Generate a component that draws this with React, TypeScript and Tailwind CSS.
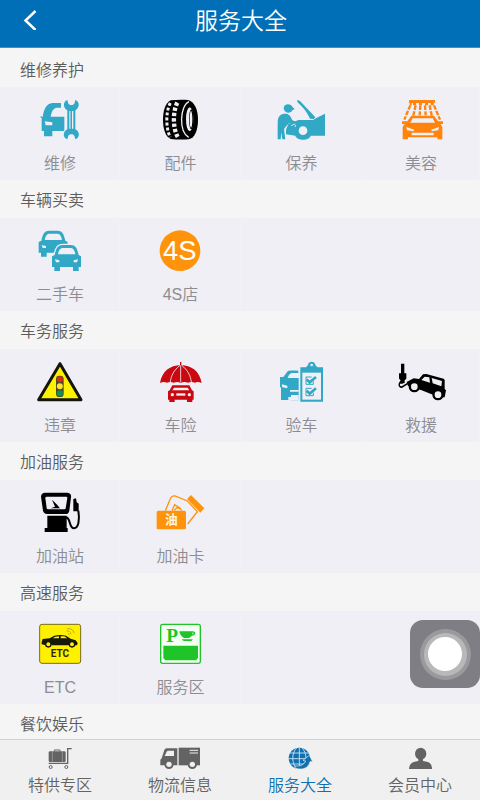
import type { ReactNode } from "react"

const BG = "#efeff5"
const CYAN = "#30a8c6"
const ORANGE = "#ff830c"

interface Service {
  name: string
  icon: ReactNode
}

interface Section {
  title: string
  items: Service[]
}

// Front view of a car, used twice in the second-hand icon
function FrontCar({ x, y }: { x: number; y: number }) {
  return (
    <g transform={`translate(${x} ${y})`}>
      <path
        fill={CYAN}
        stroke={BG}
        strokeWidth="8"
        paintOrder="stroke"
        d="M8 30C13 8 18 0 32 0H56C70 0 75 8 80 30L87 34V66H80V78H63V66H24V78H7V66H0V34Z"
      />
      <path fill={BG} d="M18 28C21 13 25 9 34 9H54C63 9 67 13 70 28Z" />
      <path fill={BG} d="M9 43L22 46V52H12ZM78 43L65 46V52H75Z" />
    </g>
  )
}

const repairIcon = (
  <g fill={CYAN}>
    <path d="M38 60C42 34 50 20 67 18H93V32H78C69 35 64 44 62 59H103V98C103 101 101 102 98 102H67V118H42V102H35V62H32V57Z" />
    <path fill={BG} d="M44 73L67 76V85H47Z" />
    <path d="M112 9C99 13 98 32 112 40V97C98 104 98 123 112 127L115 116L120 112H128L133 116L136 127C150 123 150 104 136 97V40C150 32 149 13 136 9L133 20L128 24H120L115 20Z" />
    <path stroke={BG} strokeWidth="4" d="M120 42V95M128 42V95" />
    <path stroke={CYAN} strokeWidth="4" d="M124 42V95" />
  </g>
)

const tireIcon = (
  <g fill="none">
    <path fill="#000" d="M62 10C80 8 98 8 114 9C135 15 144 40 144 68C144 98 135 123 116 127C98 128 80 128 62 126C46 118 39 95 39 68C39 42 46 18 62 10Z" />
    <path stroke={BG} strokeWidth="9" strokeDasharray="9 6" d="M61 18C47 42 47 96 61 121" />
    <path stroke={BG} strokeWidth="13" strokeDasharray="10 6" d="M82 17C68 42 68 96 84 121" />
    <path stroke={BG} strokeWidth="4" d="M117 14C89 26 86 104 116 121" />
    <ellipse cx="119" cy="67" rx="11" ry="36" fill={BG} />
    <ellipse cx="124" cy="67" rx="7" ry="30" fill="#000" />
    <ellipse cx="123" cy="67" rx="4" ry="25" fill={BG} />
  </g>
)

const maintainIcon = (
  <g fill={CYAN}>
    <path d="M38 34C38 19 60 18 65 31L71 36L64 40C61 51 39 50 38 34Z" />
    <path d="M20 127V77C20 57 29 50 43 50C54 50 59 57 64 70L78 75L75 82L54 79L46 87L39 97L43 127H34L31 106L29 127Z" />
    <path d="M79 8L87 12L133 61L128 66L117 65C107 43 96 31 79 15Z" />
    <path d="M52 81L67 76L82 69H126L136 63L162 50V116H119C115 132 78 133 73 116L45 112V98Z" />
    <circle cx="96" cy="101" r="13" fill={BG} />
    <path fill="none" stroke={BG} strokeWidth="3" d="M61 87C69 77 76 83 72 90" />
  </g>
)

const washIcon = (
  <g fill={ORANGE}>
    <path d="M55 9H132V17H128V25H119V18H111V25H102V18H93V25H84V18H75V25H66V18H62V25H56V17H53Z" />
    <path fill="none" stroke={ORANGE} strokeWidth="7" strokeDasharray="14 4" d="M58 25L40 68M74 25L66 60M88 25L86 55M102 25L104 55M116 25L123 60M129 25L147 68" />
    <path d="M61 56H129L141 73H156V81H149L154 90V127H139V121H51V127H35V90L41 81H33V73H49Z" />
    <path fill={BG} d="M65 64H125L132 77H58Z" />
    <path fill={BG} d="M46 90L70 98L67 103L48 100ZM144 90L120 98L123 103L142 100ZM62 107H128V115H62Z" />
  </g>
)

const usedCarIcon = (
  <g>
    <FrontCar x={26} y={8} />
    <FrontCar x={66} y={51} />
  </g>
)

const shop4sIcon = (
  <g>
    <circle cx="90" cy="68" r="61" fill="#ff940c" />
    <text x="89" y="97" textAnchor="middle" fontSize="82" fill="#fff" fontFamily="Liberation Sans, sans-serif">
      4S
    </text>
  </g>
)

const violationIcon = (
  <g>
    <path d="M90 14L153 122H26Z" fill="#fff200" stroke="#15150c" strokeWidth="9" strokeLinejoin="round" />
    <rect x="78" y="50" width="23" height="64" rx="10" fill="#4b4a26" />
    <circle cx="89.500" cy="61" r="9" fill="#df2a16" />
    <circle cx="89.500" cy="82" r="9" fill="#ffe32c" />
    <circle cx="89.500" cy="103" r="9" fill="#07945a" />
  </g>
)

const insuranceIcon = (
  <g fill="#c9090f">
    <path d="M92 9V20" stroke="#c9090f" strokeWidth="4" />
    <path d="M30 72C36 36 61 19 92 18C124 19 149 36 155 72Q144 67 135 71Q124 67 114 71Q103 67 92 71Q81 67 71 71Q61 67 51 71Q40 67 30 72Z" />
    <path d="M90 19C72 33 63 50 61 69M92 19V69M95 19C113 33 122 50 124 69" fill="none" stroke={BG} strokeWidth="2.500" />
    <path d="M67 79H118L126 94L131 97V122H127V129H111V122H74V129H58V122H54V97L59 94Z" />
    <path fill={BG} d="M72 86H113L118 94H67Z" />
    <circle cx="67" cy="107" r="5" fill={BG} />
    <circle cx="118" cy="107" r="5" fill={BG} />
    <path fill={BG} d="M79 103H106V110H79Z" />
  </g>
)

const inspectIcon = (
  <g fill={CYAN}>
    <path d="M37 54L50 37C54 34 67 35 82 35V42H62C55 45 53 49 50 57H83V124H60V114H52V123H30V86L27 83V54Z" />
    <path fill={BG} d="M32 76L49 80V88L34 85ZM57 93H83V98H57ZM60 108H83V124H60Z" />
    <path d="M88 25H105L111 18C112 5 132 5 133 18L139 25H156V128H88Z" />
    <path fill={BG} d="M94 41H150V122H94Z" />
    <circle cx="122" cy="18" r="4" fill={BG} />
    <path fill="none" stroke={CYAN} strokeWidth="3" d="M122 54H105V76H127V67M122 88H105V110H127V101" />
    <path fill="none" stroke={CYAN} strokeWidth="8" d="M107 61L116 70L135 54M107 95L116 104L135 88" />
  </g>
)

const rescueIcon = (
  <g>
    <path d="M30 14H40V43H46V59L41 64V71L34 74H27V80L32 82L48 72L52 75L34 86C25 90 19 78 25 70L29 64L24 59V43H30Z" />
    <path d="M47 69L68 58L84 60L96 46L106 45L158 59L161 63V90L165 94L161 115H151L120 105L92 94L51 81Z" />
    <path fill={BG} d="M101 53L115 55L117 71L91 63ZM122 57L153 66L151 82L125 73Z" />
    <circle cx="70" cy="83" r="17" />
    <circle cx="70" cy="83" r="10" fill={BG} />
    <circle cx="141" cy="107" r="17" />
    <circle cx="141" cy="107" r="10" fill={BG} />
  </g>
)

const gasStationIcon = (
  <g>
    <path d="M44 8H113Q125 10 123 22L118 62Q116 72 107 72H51Q41 71 39 62L33 20Q33 9 44 8Z" />
    <path fill={BG} d="M50 20H109Q112 20 112 24L107 55Q106 58 103 58H54Q51 58 50 55L46 24Q46 20 50 20Z" />
    <path d="M62 55L75 50L66 29L82 45L90 55Z" />
    <path d="M52 77H110V114H113V126H44V114H52Z" />
    <path fill="none" stroke="#000" strokeWidth="6" d="M108 83C122 80 116 115 132 115C145 114 150 91 145 62" />
    <path d="M130 27L138 25L140 37L146 41V64H130Z" />
  </g>
)

const gasCardIcon = (
  <g fill="none" stroke="#ff940c" strokeWidth="4">
    <path d="M46 62L62 24Q66 16 75 18L112 33L142 65L113 102" />
    <path d="M66 62L74 44L90 54L95 62M73 62L80 53L90 56" />
    <path d="M111 27L123 15L163 55L151 68Z" fill="#ff940c" stroke="none" />
    <rect x="20" y="62" width="88" height="56" rx="5" fill="#ff940c" stroke="none" />
    <text x="64" y="103" textAnchor="middle" fontSize="38" fontWeight="700" fill="#fff4df" stroke="none" fontFamily="Noto Sans CJK SC, sans-serif">
      油
    </text>
  </g>
)

const etcIcon = (
  <g>
    <rect x="29" y="10" width="123" height="117" rx="7" fill="#fff000" stroke="#766b1b" strokeWidth="3" />
    <path fill="#17170b" d="M35 63L38 54L59 52L73 44Q91 40 108 44L122 53L137 58L143 66L141 73H131Q125 60 116 73H66Q57 60 48 73L35 70Z" />
    <path fill="#fff000" d="M68 52L76 47L87 46V52ZM92 46H103L112 52H92Z" />
    <circle cx="55" cy="70" r="8" fill="#fff000" stroke="#17170b" strokeWidth="4" />
    <circle cx="126" cy="70" r="8" fill="#fff000" stroke="#17170b" strokeWidth="4" />
    <path fill="none" stroke="#a58d20" strokeWidth="2" d="M109 30Q122 28 123 40M111 23Q130 21 132 37M114 36L119 43" />
    <text x="90" y="108" textAnchor="middle" fontSize="30" fontWeight="700" fill="#2c2909" fontFamily="Roboto, sans-serif">
      ETC
    </text>
  </g>
)

const restAreaIcon = (
  <g fill="#1fc528">
    <rect x="32" y="10" width="119" height="117" rx="6" fill="#f3fff2" stroke="#1fc528" strokeWidth="4" />
    <path d="M40 74H144V111L138 118H46L40 111Z" />
    <text x="49" y="62" fontSize="58" fontWeight="700" fontFamily="Liberation Serif, serif">
      P
    </text>
    <path d="M88 31H128C140 31 138 44 125 45L117 51H102C94 47 90 41 88 31ZM95 55H129L124 60H101Z" />
    <path fill="#f3fff2" d="M127 35H132L127 41Z" />
  </g>
)

const sections: Section[] = [
  {
    title: "维修养护",
    items: [
      { name: "维修", icon: repairIcon },
      { name: "配件", icon: tireIcon },
      { name: "保养", icon: maintainIcon },
      { name: "美容", icon: washIcon },
    ],
  },
  {
    title: "车辆买卖",
    items: [
      { name: "二手车", icon: usedCarIcon },
      { name: "4S店", icon: shop4sIcon },
    ],
  },
  {
    title: "车务服务",
    items: [
      { name: "违章", icon: violationIcon },
      { name: "车险", icon: insuranceIcon },
      { name: "验车", icon: inspectIcon },
      { name: "救援", icon: rescueIcon },
    ],
  },
  {
    title: "加油服务",
    items: [
      { name: "加油站", icon: gasStationIcon },
      { name: "加油卡", icon: gasCardIcon },
    ],
  },
  {
    title: "高速服务",
    items: [
      { name: "ETC", icon: etcIcon },
      { name: "服务区", icon: restAreaIcon },
    ],
  },
  { title: "餐饮娱乐", items: [] },
]

const tabs = [
  {
    name: "特供专区",
    icon: (
      <g fill="none" stroke="currentColor" strokeWidth="4">
        <path d="M38 49H95V5H107" />
        <circle cx="44" cy="60" r="4.500" strokeWidth="3" />
        <circle cx="91" cy="60" r="4.500" strokeWidth="3" />
        <rect x="38" y="13" width="51" height="32" rx="4" fill="currentColor" stroke="none" />
        <path d="M55 13V9H72V13" strokeWidth="3" />
        <path stroke="#aaa" strokeWidth="2" d="M49 13V45M79 13V45" />
      </g>
    ),
  },
  {
    name: "物流信息",
    icon: (
      <g fill="currentColor">
        <path d="M32 4H64V55H13V38L17 34L25 9Q27 4 32 4Z" />
        <path fill="#f0f0f0" d="M35 11H54V27H26L32 14Z" />
        <path d="M68 2H132V55H68Z" />
        <path stroke="#f0f0f0" strokeWidth="3" d="M101 10H126M101 18H126" />
        <circle cx="39" cy="52" r="14" />
        <circle cx="39" cy="52" r="8" fill="#f0f0f0" />
        <circle cx="109" cy="52" r="14" />
        <circle cx="109" cy="52" r="8" fill="#f0f0f0" />
      </g>
    ),
  },
  {
    name: "服务大全",
    icon: (
      <g fill="none">
        <circle cx="70" cy="34" r="32" fill="currentColor" />
        <path stroke="#d9edf7" strokeWidth="2.500" d="M70 2V66M42 18H98M37 35H102M43 51H97M63 2C46 16 46 51 63 66M77 2C94 16 94 51 77 66" />
        <path fill="currentColor" stroke="#f0f0f0" strokeWidth="2" d="M57 57Q82 59 89 42L81 40L100 25L110 44L102 44C97 66 76 70 57 63Z" />
      </g>
    ),
  },
  {
    name: "会员中心",
    icon: (
      <g fill="currentColor">
        <ellipse cx="74" cy="20" rx="17" ry="18" />
        <path d="M67 35H81V42C101 44 108 51 108 66H39C40 51 48 44 67 42Z" />
      </g>
    ),
  },
]

export default function App() {
  return (
    <div className="relative flex h-[800px] w-[480px] flex-col overflow-hidden bg-[#f5f5f5] font-['Liberation_Sans','Noto_Sans_CJK_SC',sans-serif]">
      {/* Header */}
      <header className="grid h-12 shrink-0 grid-cols-[61px_1fr_59px] items-center border-b border-[#3d8fca] bg-[#006fb7] text-white">
        <svg className="mb-2 ml-[22px] size-5" viewBox="0 0 20 20" fill="none" stroke="currentColor" strokeWidth="2.500">
          <path d="M13.500 1L3.500 10.500L13.500 20" />
        </svg>
        <h1 className="mb-1.5 text-center text-[23px] leading-8 font-[350]">服务大全</h1>
      </header>

      {/* Service sections */}
      <main className="min-h-0 flex-1 overflow-hidden">
        {sections.map((section, index) => (
          <section key={section.title}>
            <h2 className={`flex items-center pl-5 text-base font-[350] text-[#5c5c5c] ${index === 0 ? "h-[39px] pt-1.5" : "h-[38px] pt-1"}`}>
              {section.title}
            </h2>
            {section.items.length > 0 && (
              <div className="grid h-[93px] grid-cols-[120px_121px_121px_118px] bg-[#efeff5]">
                {section.items.map((item) => (
                  <div key={item.name} className="flex flex-col items-center border-r border-[#f1f1f6] pt-2.5">
                    <svg className="h-[46px] w-[60px] shrink-0" viewBox="0 0 180 138">
                      {item.icon}
                    </svg>
                    <span className="mt-[9px] pl-px text-base leading-6 font-[350] text-[#8d8d91]">{item.name}</span>
                  </div>
                ))}
              </div>
            )}
          </section>
        ))}
      </main>

      {/* Tab bar */}
      <nav className="grid h-[61px] shrink-0 grid-cols-4 border-t border-[#d2d2d2] bg-[#f0f0f0]">
        {tabs.map((tab) => (
          <div
            key={tab.name}
            className={`flex flex-col items-center pt-[7px] ${tab.name === "服务大全" ? "text-[#1170b0]" : "text-[#636363]"}`}
          >
            <svg className="h-6 w-12 shrink-0" viewBox="0 0 144 72">
              {tab.icon}
            </svg>
            <span className="mt-[3px] text-base leading-6 font-[350]">{tab.name}</span>
          </div>
        ))}
      </nav>

      {/* Floating touch button */}
      <div className="absolute top-[620px] left-[410px] flex h-[68px] w-[70px] items-center justify-center rounded-[13px] bg-[#7e7e84]">
        <div className="flex size-[51px] items-center justify-center rounded-full bg-[#99999e]">
          <div className="flex size-[43px] items-center justify-center rounded-full bg-[#b8b8bb]">
            <div className="size-[34px] rounded-full bg-white" />
          </div>
        </div>
      </div>
    </div>
  )
}
